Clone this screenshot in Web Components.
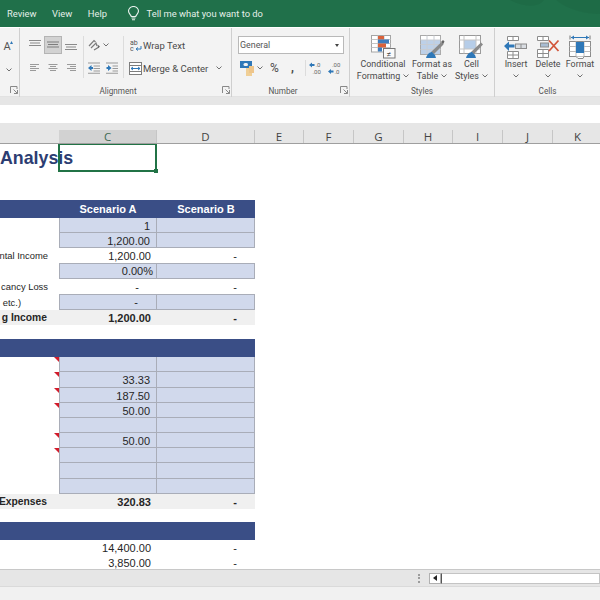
<!DOCTYPE html>
<html>
<head>
<meta charset="utf-8">
<title>Rental Analysis</title>
<style>
  html, body { margin: 0; padding: 0; width: 600px; height: 600px; overflow: hidden; background: #fff; }
  body { font-family: Roboto, sans-serif; }
</style>
</head>
<body>
<excel-app>
  <title-bar>
    <span>Review</span><span>View</span><span>Help</span>
  </title-bar>
  <excel-ribbon></excel-ribbon>
  <formula-strip></formula-strip>
  <column-heads></column-heads>
  <sheet-grid>
    <sheet-row kind="title" label="Analysis"></sheet-row>
    <sheet-row kind="gap" h="28"></sheet-row>
    <sheet-row kind="head" c="Scenario A" d="Scenario B"></sheet-row>
    <sheet-row kind="input" c="1"></sheet-row>
    <sheet-row kind="input" c="1,200.00"></sheet-row>
    <sheet-row label="ntal Income" c="1,200.00" d="-"></sheet-row>
    <sheet-row kind="input" top h="16" c="0.00%"></sheet-row>
    <sheet-row label="cancy Loss" c="-" d="-"></sheet-row>
    <sheet-row kind="input" top h="16" label="etc.)" lp="38" c="-"></sheet-row>
    <sheet-row kind="total" label="g Income" c="1,200.00" d="-"></sheet-row>
    <sheet-row kind="gap" h="14"></sheet-row>
    <sheet-row kind="head"></sheet-row>
    <sheet-row kind="input" note></sheet-row>
    <sheet-row kind="input" note h="16" c="33.33"></sheet-row>
    <sheet-row kind="input" note c="187.50"></sheet-row>
    <sheet-row kind="input" note c="50.00"></sheet-row>
    <sheet-row kind="input"></sheet-row>
    <sheet-row kind="input" note c="50.00"></sheet-row>
    <sheet-row kind="input" note></sheet-row>
    <sheet-row kind="input" h="16"></sheet-row>
    <sheet-row kind="input"></sheet-row>
    <sheet-row kind="total" label="Expenses" c="320.83" d="-"></sheet-row>
    <sheet-row kind="gap" h="13"></sheet-row>
    <sheet-row kind="head"></sheet-row>
    <sheet-row c="14,400.00" d="-"></sheet-row>
    <sheet-row c="3,850.00" d="-"></sheet-row>
  </sheet-grid>
  <status-bar></status-bar>
</excel-app>

<script>
// iconos del ribbon, dibujados a mano
const ICONOS = {
  alignTop: `<svg width="12" height="12" viewBox="0 0 12 12"><path d="M0 1.5h12M1 4h10M0 6.5h12" stroke="#8a8a8a" stroke-width="1.2"/></svg>`,
  alignMid: `<svg width="12" height="12" viewBox="0 0 12 12"><path d="M0 3h12M1 5.5h10M0 8h12" stroke="#7c7c7c" stroke-width="1.2"/></svg>`,
  alignBot: `<svg width="12" height="12" viewBox="0 0 12 12"><path d="M0 5.5h12M1 8h10M0 10.5h12" stroke="#8a8a8a" stroke-width="1.2"/></svg>`,
  left: `<svg width="12" height="10" viewBox="0 0 12 10"><path d="M1 1.5h9M1 3.5h6M1 5.5h9M1 7.5h6" stroke="#9a9a9a" stroke-width="1.2"/></svg>`,
  center: `<svg width="12" height="10" viewBox="0 0 12 10"><path d="M1.5 1.5h9M3 3.5h6M1.5 5.5h9M3 7.5h6" stroke="#9a9a9a" stroke-width="1.2"/></svg>`,
  right: `<svg width="12" height="10" viewBox="0 0 12 10"><path d="M2 1.5h9M5 3.5h6M2 5.5h9M5 7.5h6" stroke="#9a9a9a" stroke-width="1.2"/></svg>`,
  orient: `<svg width="13" height="13" viewBox="0 0 13 13"><path d="M1 7l5-5.5 1.5 1.5M3 9l5-5 1 3" fill="none" stroke="#7b7b7b" stroke-width="1.2"/><path d="M6 11l5-3" stroke="#777" stroke-width="1.2"/><path d="M9.5 5.5l2.5 2-2 1.5z" fill="#666"/></svg>`,
  indentOut: `<svg width="12" height="12" viewBox="0 0 12 12"><path d="M0 1h12M5.5 4h6.5M5.5 6.5h6.5M5.5 9h6.5M0 11.2h12" stroke="#9a9a9a" stroke-width="1.1"/><path d="M0 6l3.5-3v2h1.5v2H3.500v2z" fill="#2f78b8"/></svg>`,
  indentIn: `<svg width="12" height="12" viewBox="0 0 12 12"><path d="M0 1h12M6.500 4h5.500M6.500 6.500h5.500M6.500 9h5.500M0 11.200h12" stroke="#9a9a9a" stroke-width="1.1"/><path d="M5.500 6L2 3v2H.5v2H2v2z" fill="#2f78b8"/></svg>`,
  wrap: `<svg width="12" height="13" viewBox="0 0 12 13"><text x="0" y="5.500" font-family="Roboto" font-size="7" fill="#555">ab</text><text x="0" y="12" font-family="Roboto" font-size="7" fill="#555">c</text><path d="M11 7v3H6.500M8 8.500L6 10l2 1.500" fill="none" stroke="#2f78b8" stroke-width="1"/></svg>`,
  merge: `<svg width="13" height="13" viewBox="0 0 13 13"><rect x=".5" y=".5" width="12" height="12" fill="#fff" stroke="#7d7d7d"/><path d="M0 3.500h13M0 9.500h13" stroke="#7d7d7d"/><path d="M2 6.500h9" stroke="#2f78b8"/><path d="M4 5L2 6.500 4 8M9 5l2 1.500L9 8" fill="none" stroke="#2f78b8"/></svg>`,
  money: `<svg width="16" height="17" viewBox="0 0 16 17"><rect x="0" y="1" width="12" height="7" fill="#2f78b8"/><rect x="3.500" y="3" width="4.500" height="3" rx="1.500" fill="#f3f3f3"/><rect x="6" y="8" width="6" height="8" fill="#f0cf96"/><rect x="9" y="6" width="5" height="7" fill="#eec58a"/></svg>`,
  incDec: `<svg width="14" height="14" viewBox="0 0 14 14"><path d="M0 4l3-2.500V3h2.500v2H3v1.500z" fill="#2f78b8"/><text x="6.500" y="6" font-family="Roboto" font-size="6" fill="#666">.0</text><text x="3.500" y="12.500" font-family="Roboto" font-size="6" fill="#666">.00</text></svg>`,
  decDec: `<svg width="14" height="14" viewBox="0 0 14 14"><text x="4" y="5.500" font-family="Roboto" font-size="6" fill="#666">.00</text><path d="M0 10.500l3-2.500v1.500h2.500v2H3V13z" fill="#2f78b8"/><text x="6.500" y="12.500" font-family="Roboto" font-size="6" fill="#666">.0</text></svg>`,
  cond: `<svg width="25" height="24" viewBox="0 0 25 24"><rect x=".5" y=".5" width="19" height="16.500" fill="#fff" stroke="#a5a5a5"/><path d="M7 .5v16.500M13 .5v16.500M.5 4.500h19M.5 8.500h19M.5 12.500h19" stroke="#c4c4c4"/><rect x="7" y="1" width="6" height="3.500" fill="#d9623b"/><rect x="7" y="4.500" width="11" height="4" fill="#3e7dbd"/><rect x="7" y="8.500" width="8" height="4" fill="#d9623b"/><rect x="7" y="12.500" width="4" height="4" fill="#3e7dbd"/><rect x="12.500" y="13.500" width="11.500" height="9.500" fill="#fafafa" stroke="#777"/><text x="15.500" y="21.500" font-family="Roboto" font-size="8.500" fill="#444">≠</text></svg>`,
  table: `<svg width="25" height="24" viewBox="0 0 25 24"><rect x=".5" y=".5" width="20" height="19" fill="#fff" stroke="#aaa"/><rect x="1" y="5" width="19" height="14" fill="#bdd0e8"/><path d="M7 .5v19M14 .5v19M.5 5h20M.5 9.500h20M.5 14.500h20" stroke="#c8ccd2"/><path d="M11 17L21 7.500l2.500 2L14 19z" fill="#8a8a8a"/><path d="M21 7l2-2 1.500 1.500-1.500 3z" fill="#666"/><path d="M6 23c1-4 4-6 6-6l3 3 1 3z" fill="#2f78b8"/></svg>`,
  cell: `<svg width="25" height="24" viewBox="0 0 25 24"><rect x=".5" y=".5" width="21" height="18" fill="#fff" stroke="#9a9a9a"/><rect x="5" y="5" width="12" height="9" fill="#b6cde8"/><path d="M5 .5v18M17 .5v18M.5 5h21M.5 14h21" stroke="#c4c4c4"/><path d="M12 17L22 7.500l2 2L15 19z" fill="#8a8a8a"/><path d="M7 23c1-4 4-6 6-6l3 3 1 3z" fill="#2f78b8"/></svg>`,
  insert: `<svg width="24" height="24" viewBox="0 0 24 24"><path d="M3.500 1.500h11v4h-11zM9 1.500v4M3.500 16.500h11v7h-11zM9 16.500v7M3.500 20h11" fill="#fff" stroke="#8c8c8c"/><rect x="11.500" y="9" width="11" height="4.500" fill="#d9dde2" stroke="#8c8c8c"/><path d="M17 9v4.500" stroke="#8c8c8c"/><path d="M0 11l5-4.500v3h5.500v3H5V16z" fill="#2f78b8"/></svg>`,
  del: `<svg width="24" height="24" viewBox="0 0 24 24"><path d="M1.500 1.500h11v4h-11zM7 1.500v4M1.500 14.500h11v8h-11zM7 14.500v8M1.500 18.500h11" fill="#fff" stroke="#8c8c8c"/><rect x="4.500" y="8" width="8" height="4" fill="#a9bdd3" stroke="#8c8c8c"/><path d="M13 5.500L22.500 16M22.500 5.500L13 16" stroke="#d2553a" stroke-width="1.800"/></svg>`,
  format: `<svg width="24" height="24" viewBox="0 0 24 24"><path d="M2 .5v4M22 .5v4" stroke="#777"/><path d="M3 2.500h18" stroke="#2f78b8"/><path d="M6 .5L3 2.500l3 2zM18 .5l3 2-3 2z" fill="#2f78b8"/><rect x="1.500" y="6.500" width="21" height="15" fill="#fff" stroke="#8c8c8c"/><path d="M8 6.500v15M16 6.500v15M1.500 11.500h21M1.500 16.500h21" stroke="#bbb"/><rect x="8" y="7" width="8" height="11" fill="#2f78b8"/><path d="M8 21.500l2 2h5l1-2" fill="#fff" stroke="#8c8c8c"/></svg>`,
  launcher: `<svg width="8" height="8" viewBox="0 0 8 8"><path d="M.5 7V.5H7v2.500M7.500 7.500L3.500 3.500M4 7.500h3.500V4" fill="none" stroke="#888"/></svg>`,
  chevron: `<svg width="6" height="4" viewBox="0 0 6 4"><path d="M.5.500L3 3 5.500.500" fill="none" stroke="#707070"/></svg>`
};

class RbIcon extends HTMLElement {
  connectedCallback() {
    const root = this.attachShadow({ mode: 'open' });
    root.innerHTML = `<style>:host{display:inline-flex;align-items:center;justify-content:center;line-height:0}</style>${ICONOS[this.getAttribute('name')] || ''}`;
  }
}
customElements.define('rb-icon', RbIcon);

class ExcelApp extends HTMLElement {
  connectedCallback() {
    this.attachShadow({ mode: 'open' }).innerHTML = `
      <style>
        :host { display: flex; flex-direction: column; width: 600px; height: 600px; overflow: hidden; font-family: Roboto, sans-serif; }
      </style>
      <slot></slot>`;
  }
}
customElements.define('excel-app', ExcelApp);

class TitleBar extends HTMLElement {
  connectedCallback() {
    this.attachShadow({ mode: 'open' }).innerHTML = `
      <style>
        :host { display: flex; flex: none; height: 27px; align-items: center; background: #20704a; color: #e4efe9; font-size: 9.4px; position: relative; padding-left: 7px; }
        ::slotted(span) { margin-right: 15.5px; }
        .tell { display: flex; align-items: center; gap: 7px; margin-left: 4px; }
        svg.deco { position: absolute; right: 0; top: 0; }
      </style>
      <slot></slot>
      <div class="tell">
        <svg width="13" height="15" viewBox="0 0 13 15"><path d="M4.300 10.500C3.800 8.500 1.500 7.500 1.500 5a5 4.500 0 0 1 10 0c0 2.500-2.300 3.500-2.800 5.500zM4.500 12h4M5 13.800h3" fill="none" stroke="#e8f1ec" stroke-width="1.100"/></svg>
        <span>Tell me what you want to do</span>
      </div>
      <svg class="deco" width="90" height="27" viewBox="0 0 90 27"><path d="M0 0h34C28 8 14 7 0 0z" fill="#1c6642" opacity=".5"/><path d="M46 0h44v14C76 14 58 10 46 0z" fill="#1c6642" opacity=".45"/></svg>`;
  }
}
customElements.define('title-bar', TitleBar);

class RbGroup extends HTMLElement {
  connectedCallback() {
    const w = this.getAttribute('w');
    const label = this.getAttribute('label') || '';
    const launcher = this.hasAttribute('launcher') ? '<rb-icon class="launch" name="launcher"></rb-icon>' : '';
    this.attachShadow({ mode: 'open' }).innerHTML = `
      <style>
        :host { display: flex; flex: none; flex-direction: column; width: ${w}px; height: 69px; position: relative; box-sizing: border-box; border-right: 1px solid #cfcfcf; }
        :host([last]) { border-right: 0; }
        .body { flex: 1; display: flex; padding-top: 8px; min-height: 0; }
        .label { height: 14px; text-align: center; font-size: 8.2px; line-height: 17px; color: #555; }
        :host([launcher]) .label { padding-right: 15px; }
        .launch { position: absolute; right: 1px; bottom: 3px; }
      </style>
      <div class="body"><slot></slot></div>
      <div class="label">${label}</div>
      ${launcher}`;
  }
}
customElements.define('rb-group', RbGroup);

class RbBig extends HTMLElement {
  connectedCallback() {
    const w = this.getAttribute('w');
    const [a, b] = (this.getAttribute('text') || '').split('|');
    const chev = '<rb-icon name="chevron" class="chev"></rb-icon>';
    this.attachShadow({ mode: 'open' }).innerHTML = `
      <style>
        :host { display: flex; flex: none; width: ${w}px; flex-direction: column; align-items: center; font-size: 8.9px; line-height: 12px; color: #4a4a4a; white-space: nowrap; margin-top: -1px; }
        .ic { height: 23px; }
        .t { height: 12px; display: flex; align-items: center; justify-content: center; gap: 3px; }
      </style>
      <rb-icon class="ic" name="${this.getAttribute('icon')}"></rb-icon>
      <div class="t">${a}</div>
      <div class="t">${b || ''}${chev}</div>`;
  }
}
customElements.define('rb-big', RbBig);

class ExcelRibbon extends HTMLElement {
  connectedCallback() {
    this.attachShadow({ mode: 'open' }).innerHTML = `
      <style>
        :host { display: flex; flex: none; height: 69px; margin-top: 1px; background: #f3f3f3; color: #4a4a4a; font-size: 9.5px; box-shadow: inset 0 -1px 0 #e2e2e2; }
        .stack { display: flex; flex-direction: column; gap: 5px; }
        .grid { display: grid; grid-template-columns: repeat(3, 18px); grid-auto-rows: 18px; row-gap: 5px; margin-left: 6px; width: 54px; }
        .cell { display: flex; align-items: center; justify-content: center; box-sizing: border-box; }
        .on { background: #d2d2d2; border: 1px solid #b4b4b4; }
        .sep { width: 1px; height: 42px; background: #dcdcdc; flex: none; }
        .part2 { width: 39px; padding-left: 4px; box-sizing: border-box; }
        .row { height: 18px; display: flex; align-items: center; }
        .part3 { margin-left: 5px; }
        .part3 .row { white-space: nowrap; }
        .num { margin-left: 6px; }
        .combo { width: 106px; height: 18px; box-sizing: border-box; background: #fff; border: 1px solid #b9b9b9; display: flex; align-items: center; justify-content: space-between; padding: 0 4px 0 1px; color: #555; font-size: 8.9px; }
        .arrow { width: 0; height: 0; border: 2.5px solid transparent; border-top: 3px solid #444; border-bottom: 0; }
        .a-col { display: flex; flex-direction: column; align-items: center; gap: 15px; width: 12px; padding-top: 5px; box-sizing: border-box; margin-left: 1px; }
      </style>
      <rb-group w="20" launcher>
        <div class="a-col">
          <span style="font-size:11px;line-height:12px;color:#555;position:relative">A<svg style="position:absolute;left:7px;top:0" width="3" height="3" viewBox="0 0 3 3"><path d="M0 3l1.500-3L3 3z" fill="#2f78b8"/></svg></span>
          <rb-icon name="chevron" style="margin-left:3px"></rb-icon>
        </div>
      </rb-group>
      <rb-group w="212" label="Alignment" launcher>
        <div class="grid">
          <div class="cell"><rb-icon name="alignTop"></rb-icon></div>
          <div class="cell on"><rb-icon name="alignMid"></rb-icon></div>
          <div class="cell"><rb-icon name="alignBot"></rb-icon></div>
          <div class="cell"><rb-icon name="left"></rb-icon></div>
          <div class="cell"><rb-icon name="center"></rb-icon></div>
          <div class="cell"><rb-icon name="right"></rb-icon></div>
        </div>
        <div class="sep" style="margin-left:3px"></div>
        <div class="stack part2">
          <div class="row" style="gap:2px"><rb-icon name="orient"></rb-icon><rb-icon name="chevron"></rb-icon></div>
          <div class="row" style="gap:6px"><rb-icon name="indentOut"></rb-icon><rb-icon name="indentIn"></rb-icon></div>
        </div>
        <div class="sep"></div>
        <div class="stack part3">
          <div class="row"><rb-icon name="wrap" style="margin-left:1px;margin-right:1px"></rb-icon>Wrap Text</div>
          <div class="row"><rb-icon name="merge" style="margin-right:1px"></rb-icon>Merge &amp; Center<rb-icon name="chevron" style="margin-left:8px"></rb-icon></div>
        </div>
      </rb-group>
      <rb-group w="118" label="Number" launcher>
        <div class="stack num">
          <div class="combo"><span>General</span><span class="arrow"></span></div>
          <div class="row">
            <rb-icon name="money" style="margin-left:2px"></rb-icon>
            <rb-icon name="chevron" style="margin-left:1px"></rb-icon>
            <span style="font-size:12px;margin-left:7px;width:12px">%</span>
            <span style="font-size:12px;font-weight:700;margin-left:9px;width:6px;line-height:10px">,</span>
            <span class="sep" style="height:16px;margin-left:8px"></span>
            <rb-icon name="incDec" style="margin-left:3px"></rb-icon>
            <rb-icon name="decDec" style="margin-left:5px"></rb-icon>
          </div>
        </div>
      </rb-group>
      <rb-group w="145" label="Styles">
        <rb-big w="56" style="margin-left:5px" icon="cond" text="Conditional|Formatting"></rb-big>
        <rb-big w="42" icon="table" text="Format as|Table"></rb-big>
        <rb-big w="37" icon="cell" text="Cell|Styles"></rb-big>
      </rb-group>
      <rb-group w="105" label="Cells" last>
        <rb-big w="32" style="margin-left:5px" icon="insert" text="Insert|"></rb-big>
        <rb-big w="32" icon="del" text="Delete|"></rb-big>
        <rb-big w="32" icon="format" text="Format|"></rb-big>
      </rb-group>`;
  }
}
customElements.define('excel-ribbon', ExcelRibbon);

class FormulaStrip extends HTMLElement {
  connectedCallback() {
    this.attachShadow({ mode: 'open' }).innerHTML = `
      <style>
        :host { display: flex; flex-direction: column; flex: none; height: 26px; }
        .gap { height: 8px; background: #e6e6e6; }
        .bar { flex: 1; background: #fff; }
      </style>
      <div class="gap"></div><div class="bar"></div>`;
  }
}
customElements.define('formula-strip', FormulaStrip);

class ColumnHeads extends HTMLElement {
  connectedCallback() {
    const cols = [['C', 98], ['D', 98], ['E', 49], ['F', 50], ['G', 50], ['H', 49], ['I', 50], ['J', 50], ['K', 50]];
    this.attachShadow({ mode: 'open' }).innerHTML = `
      <style>
        :host { display: flex; flex: none; height: 21px; background: #e6e6e6; box-sizing: border-box; border-bottom: 1px solid #9f9f9f; padding: 7px 0 0 59px; font-family: "Open Sans", sans-serif; font-size: 11.5px; line-height: 13px; color: #444; }
        div { flex: none; box-sizing: border-box; display: flex; align-items: center; justify-content: center; border-right: 1px solid #c6c6c6; }
        .sel { background: #d2d2d2; color: #3f6b53; }
      </style>
      ${cols.map(([n, w], i) => `<div class="${i === 0 ? 'sel' : ''}" style="width:${w}px">${n}</div>`).join('')}`;
  }
}
customElements.define('column-heads', ColumnHeads);

class SheetGrid extends HTMLElement {
  connectedCallback() {
    this.attachShadow({ mode: 'open' }).innerHTML = `
      <style>
        :host { display: flex; flex-direction: column; flex: none; height: 425px; overflow: hidden; background: #fff; font-family: "Liberation Sans", Arial, sans-serif; font-size: 11px; color: #262626; }
      </style>
      <slot></slot>`;
  }
}
customElements.define('sheet-grid', SheetGrid);

class SheetRow extends HTMLElement {
  connectedCallback() {
    const kind = this.getAttribute('kind') || 'plain';
    const label = this.getAttribute('label') || '';
    const c = this.getAttribute('c') || '';
    const d = this.getAttribute('d') || '';
    const alt = this.getAttribute('h') || { title: '28', head: '18' }[kind] || '15';
    const lp = this.getAttribute('lp');
    const clase = v => v === '-' ? 'dash' : (v.endsWith('%') ? 'pct' : '');
    this.attachShadow({ mode: 'open' }).innerHTML = `
      <style>
        :host { display: grid; flex: none; grid-template-columns: 59px 98px 98px; grid-template-rows: ${alt}px; height: ${alt}px; line-height: 12px; }
        div { box-sizing: border-box; display: flex; align-items: center; justify-content: flex-end; padding: 1px 6px 0 0; white-space: nowrap; position: relative; min-height: 0; }
        .dash { padding-right: 18px; }
        .pct { padding-right: 3px; }
        .lab { padding-right: ${lp || 11}px; font-size: 9.4px; }
        .note::after { content: ""; position: absolute; top: 0; right: 0; border-top: 5px solid #d11c2b; border-left: 5px solid transparent; }
        :host([kind="head"]) div { background: #3a4e86; color: #fff; font-weight: 700; justify-content: center; padding: 0; }
        :host([kind="input"]) .v { background: #d1d9ec; border-right: 1px solid #a9adb8; border-bottom: 1px solid #a9adb8; }
        :host([kind="input"]) .c { border-left: 1px solid #a9adb8; }
        :host([top]) .v { box-shadow: inset 0 1px 0 #a9adb8; }
        :host([kind="total"]) div { background: #f0f0f0; font-weight: 700; padding-top: 0; font-size: 11px; }
        :host([kind="total"]) .lab { padding-right: 12px; font-size: 10.3px; }
        :host([kind="title"]) .lab { justify-content: flex-start; padding: 0; font-size: 17.8px; font-weight: 700; color: #2c3d72; }
        :host([kind="title"]) .c { border: 2px solid #217346; margin: -1px 0 0 -1px; height: 29px; width: 99px; z-index: 1; padding: 0; }
        .handle { position: absolute; right: -3px; bottom: -3px; width: 4px; height: 4px; background: #217346; border: 0; padding: 0; }
      </style>
      <div class="lab ${this.hasAttribute('note') ? 'note' : ''}"><span>${label}</span></div>
      ${kind === 'gap' ? '' : `<div class="v c ${clase(c)}">${c}${kind === 'title' ? '<div class="handle"></div>' : ''}</div><div class="v d ${clase(d)}">${d}</div>`}`;
  }
}
customElements.define('sheet-row', SheetRow);

class StatusBar extends HTMLElement {
  connectedCallback() {
    this.attachShadow({ mode: 'open' }).innerHTML = `
      <style>
        :host { display: flex; flex-direction: column; flex: none; height: 31px; }
        .tabs { height: 18px; box-sizing: border-box; background: #e6e6e6; border-top: 1px solid #c8c8c8; border-bottom: 1px solid #dadada; display: flex; align-items: center; padding-left: 418px; }
        .dots { width: 2px; height: 9px; margin-right: 9px; background: repeating-linear-gradient(#9c9c9c 0 2px, transparent 2px 3.500px); }
        .btn { width: 12px; height: 11px; box-sizing: border-box; background: #fff; border: 1px solid #b0b0b0; display: flex; align-items: center; justify-content: center; }
        .btn i { width: 0; height: 0; border: 3px solid transparent; border-right: 4px solid #222; border-left: 0; }
        .track { flex: 1; height: 11px; box-sizing: border-box; background: #fff; border: 1px solid #c4c4c4; border-left: 1px solid #555; }
        .foot { flex: 1; background: #f1f1f1; }
      </style>
      <div class="tabs"><div class="dots"></div><div class="btn"><i></i></div><div class="track"></div></div>
      <div class="foot"></div>`;
  }
}
customElements.define('status-bar', StatusBar);
</script>
</body>
</html>
